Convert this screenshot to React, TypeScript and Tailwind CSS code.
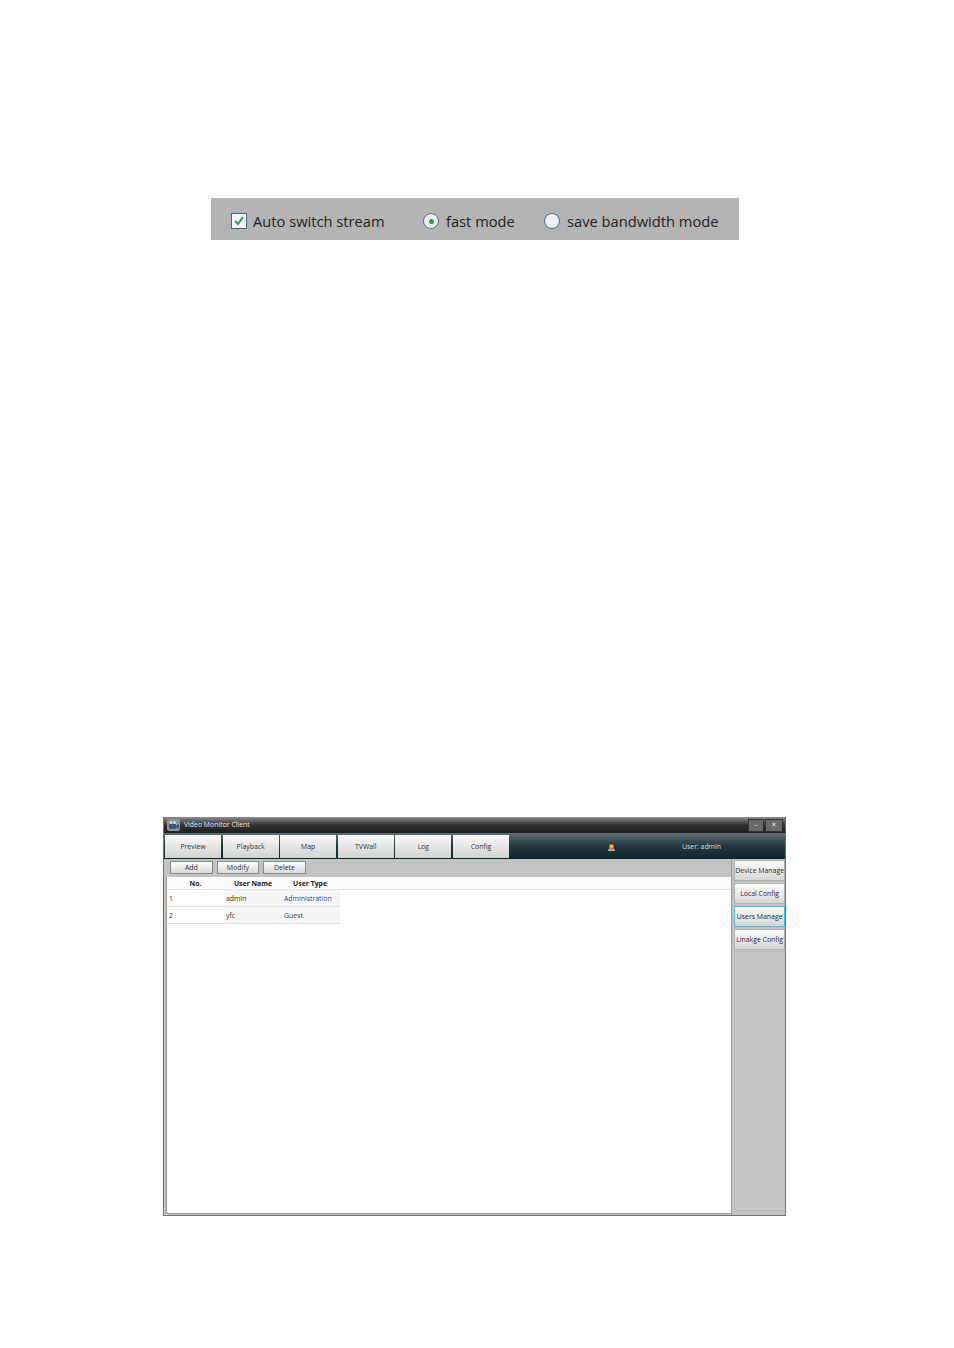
import React from 'react';

const tabs = ['Preview', 'Playback', 'Map', 'TVWall', 'Log', 'Config'];
const tools = ['Add', 'Modify', 'Delete'];
const sideItems = [
  { label: 'Device Manage', color: 'text-[#2a2a3a]', active: false },
  { label: 'Local Config', color: 'text-[#4a1a3a]', active: false },
  { label: 'Users Manage', color: 'text-[#1a2a4a]', active: true },
  { label: 'Linakge Config', color: 'text-[#3a1a4a]', active: false },
];
const users = [
  { no: '1', name: 'admin', type: 'Administration', typeColor: 'text-[#1b4f8a]' },
  { no: '2', name: 'yfc', type: 'Guest', typeColor: 'text-[#444]' },
];

const AppIcon = () => (
  <svg width="13" height="12" viewBox="0 0 13 12">
    <rect x="0" y="0" width="13" height="12" rx="2" fill="#8b959e" />
    <rect x="2" y="5" width="7" height="5" rx="1" fill="#33587f" />
    <path d="M9 7l3-2v5l-3-2z" fill="#33587f" />
    <circle cx="4" cy="3.5" r="1.5" fill="#cdd5dc" />
    <circle cx="7.5" cy="3.5" r="1.5" fill="#cdd5dc" />
  </svg>
);

const Alarm = () => (
  <svg width="9" height="9" viewBox="0 0 9 9">
    <path d="M2 8V4.5a2.5 2.5 0 0 1 5 0V8z" fill="#ee6a14" />
    <circle cx="4.5" cy="4.5" r="1.4" fill="#ffc24a" />
    <rect x="1" y="7.5" width="7" height="1.5" fill="#b9b0a0" />
  </svg>
);

const grayTexture = 'bg-[#c3c3c3] bg-[repeating-linear-gradient(0deg,#c4c4c4_0px,#c4c4c4_1px,#c2c2c2_1px,#c2c2c2_2px)]';

export default function App() {
  return (
    <div className="w-[954px] h-[1348px] bg-white overflow-hidden font-['Open_Sans','Noto_Sans',sans-serif]">
      {/* stream options strip */}
      <div className="ml-[211px] mt-[198px] w-[528px] h-[42px] bg-[#b4b4b4] flex items-center pl-[20px] pt-[4px] text-[14.7px] text-[#222]">
        <span className="w-[16px] h-[16px] border border-[#3f6a8f] bg-[#f4f6f8] flex items-center justify-center">
          <svg width="12" height="12" viewBox="0 0 12 12">
            <path d="M2 6l3 3 5-7" fill="none" stroke="#2e9e3e" strokeWidth="2" />
          </svg>
        </span>
        <span className="ml-[6px] w-[170px] leading-none whitespace-nowrap">Auto switch stream</span>
        <span className="w-[16px] h-[16px] rounded-full border border-[#4f7189] bg-[#eef1f4] flex items-center justify-center">
          <span className="w-[5px] h-[5px] rounded-full bg-[#2ea043]" />
        </span>
        <span className="ml-[7px] w-[98px] leading-none whitespace-nowrap">fast mode</span>
        <span className="w-[16px] h-[16px] rounded-full border border-[#4f7189] bg-[#eef1f4]" />
        <span className="ml-[7px] leading-none whitespace-nowrap">save bandwidth mode</span>
      </div>

      {/* client window */}
      <div className="ml-[163px] mt-[577px] w-[623px] h-[399px] flex flex-col border-r border-b border-l border-[#6f6f6f] text-[6.9px] leading-none">
        <div className="h-[16px] flex items-center pl-[3px] pr-[2px] bg-gradient-to-b from-[#8f8f8f] via-[#333] to-[#1d1d1d]">
          <AppIcon />
          <span className="ml-[4px] text-[#e8e8e8]">Video Monitor Client</span>
          <div className="ml-auto flex gap-[1px]">
            <span className="w-[16px] h-[13px] border border-[#333] bg-[#6a6a6a] text-[#ddd] flex items-center justify-center">–</span>
            <span className="w-[18px] h-[13px] border border-[#333] bg-[#6a6a6a] text-[#ddd] flex items-center justify-center">✕</span>
          </div>
        </div>

        <div className="h-[26px] flex items-stretch pt-[2px] pb-[1px] pl-[1px] bg-gradient-to-b from-[#5f6d72] via-[#22373e] to-[#10262d]">
          <div className="flex gap-[1.6px]">
            {tabs.map(tab => (
              <div key={tab} className="w-[56px] pt-[1px] bg-gradient-to-b from-[#fafafa] to-[#d2d2d2] flex items-center justify-center text-[#333]">
                {tab}
              </div>
            ))}
          </div>
          <div className="w-[98px]" />
          <div className="flex items-center"><Alarm /></div>
          <span className="ml-[66px] mt-[1px] self-center text-[#d8dee0]">User: admin</span>
        </div>

        <div className={`flex-1 flex min-h-0 ${grayTexture}`}>
          <div className="w-[568px] flex flex-col">
            <div className="h-[18px] flex items-center gap-[4px] pl-[6px] pb-[2px]">
              {tools.map(tool => (
                <button key={tool} className="w-[42.6px] h-[13px] pt-[2px] border border-[#8a8a8a] bg-gradient-to-b from-[#fbfbfb] to-[#dcdcdc] text-[6.9px] text-[#333] flex items-center justify-center">
                  {tool}
                </button>
              ))}
            </div>
            <div className="flex-1 ml-[2px] mb-[1px] bg-white border-l border-b border-[#9a9a9a]">
              <div className="h-[13px] pt-[2px] flex items-center border-b border-[#e4e4ec] bg-[#fbfbfb] font-bold text-[#222]">
                <span className="w-[57px] text-center">No.</span>
                <span className="w-[58px] text-center">User Name</span>
                <span className="w-[56px] text-center">User Type</span>
              </div>
              {users.map(u => (
                <div key={u.no} className="h-[17px] w-[173px] flex items-center border-b border-[#e2e2e2] text-[#333]">
                  <span className="w-[57px] h-full flex items-center pl-[2px] pt-[3px] bg-white text-[#5a1030]">{u.no}</span>
                  <span className="w-[58px] h-full flex items-center pl-[2px] pt-[3px] bg-[#f5f5f5] text-[#4a3a10]">{u.name}</span>
                  <span className={`w-[58px] h-full flex items-center pl-[2px] pt-[3px] bg-[#f5f5f5] ${u.typeColor}`}>{u.type}</span>
                </div>
              ))}
            </div>
          </div>
          <div className="flex-1 flex flex-col gap-[2px] pt-[1px] pl-[2px] border-l border-[#9a9a9a]">
            {sideItems.map(item => (
              <div
                key={item.label}
                className={`h-[21px] flex items-center justify-center pt-[2px] whitespace-nowrap bg-gradient-to-b from-[#fcfcfc] to-[#d6d6d6] border ${item.color} ${item.active ? 'border-[#3fc0e8]' : 'border-[#b0b0b0]'}`}
              >
                {item.label}
              </div>
            ))}
          </div>
        </div>
      </div>
    </div>
  );
}
